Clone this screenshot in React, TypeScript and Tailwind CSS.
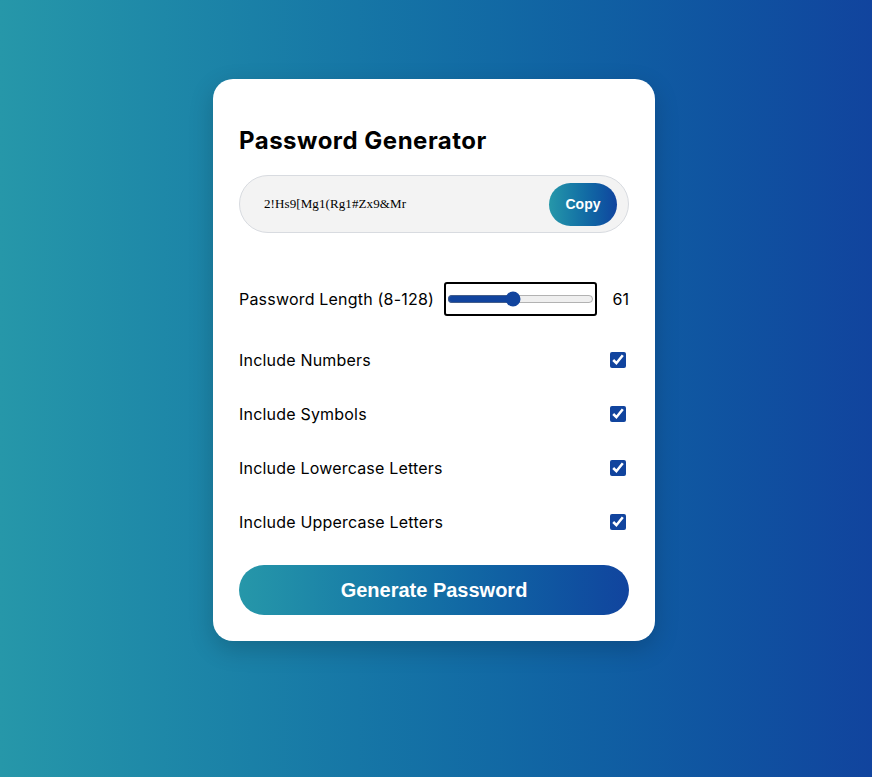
import React, { useState } from "react";

export default function App() {
  const [len, setLen] = useState(61);
  const [opts, setOpts] = useState([true, true, true, true]);
  const labels = [
    "Include Numbers",
    "Include Symbols",
    "Include Lowercase Letters",
    "Include Uppercase Letters",
  ];
  return (
    <div
      className="min-h-[777px] w-full flex justify-center items-start pr-[4px] bg-gradient-to-r from-[#2697a9] to-[#11449e]"
      style={{ fontFamily: "Inter, 'Noto Sans', sans-serif" }}
    >
      <div className="mt-[79px] w-[442px] bg-white rounded-[20px] shadow-[0_8px_24px_rgba(0,0,0,0.18)] px-[26px] pt-[44px] pb-[26px] flex flex-col">
        <h1 className="text-[24px] leading-[36px] font-bold text-black tracking-[0.5px]">
          Password Generator
        </h1>
        <div className="mt-[16px] h-[58px] rounded-full bg-[#f3f3f3] border border-[#d8dbe0] flex items-center pl-[24px] pr-[11px]">
          <span
            className="flex-1 text-[13px] text-black tracking-[0.1px]"
            style={{ fontFamily: "'Liberation Serif', serif" }}
          >
            2!Hs9[Mg1(Rg1#Zx9&amp;Mr
          </span>
          <button
            className="w-[68px] h-[43px] rounded-full bg-gradient-to-r from-[#2697a9] to-[#11449e] text-white text-[14px] font-bold"
            style={{ fontFamily: "'Liberation Sans', Arial, sans-serif" }}
          >
            Copy
          </button>
        </div>
        <div className="mt-[49px] h-[34px] flex items-center">
          <span className="text-[16px] tracking-[0.2px] text-black">Password Length (8-128)</span>
          <div className="ml-auto h-[34px] w-[153px] border-2 border-black rounded-[3px] flex items-center justify-center">
            <input
              type="range"
              min={8}
              max={128}
              value={len}
              onChange={(e) => setLen(Number(e.target.value))}
              className="w-[147px] accent-[#11449e]"
            />
          </div>
          <span className="w-[32px] text-right text-[16px] text-black">{len}</span>
        </div>
        {labels.map((l, i) => (
          <div
            key={l}
            className={
              "h-[24px] flex items-center " + (i === 0 ? "mt-[32px]" : "mt-[30px]")
            }
          >
            <span className="text-[16px] tracking-[0.2px] text-black">{l}</span>
            <input
              type="checkbox"
              checked={opts[i]}
              onChange={() =>
                setOpts(opts.map((o, j) => (j === i ? !o : o)))
              }
              className="ml-auto mr-[3px] w-[16px] h-[16px] accent-[#11449e]"
            />
          </div>
        ))}
        <button
          className="mt-[31px] h-[50px] rounded-full bg-gradient-to-r from-[#2697a9] to-[#11449e] text-white text-[20px] font-bold"
          style={{ fontFamily: "'Liberation Sans', Arial, sans-serif" }}
        >
          Generate Password
        </button>
      </div>
    </div>
  );
}
